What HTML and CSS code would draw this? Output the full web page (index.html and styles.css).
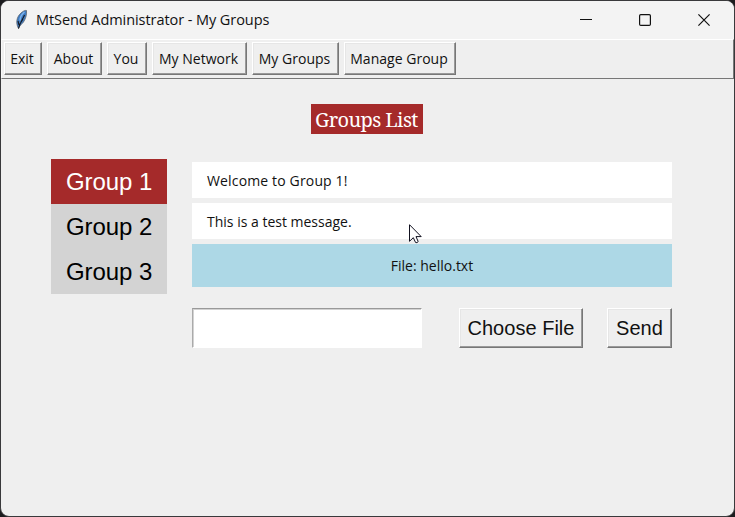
FILE: index.html
```html
<!DOCTYPE html>
<html lang="en">
<head>
<meta charset="utf-8">
<title>MtSend Administrator - My Groups</title>
<link rel="stylesheet" href="styles.css">
</head>
<body>
<div class="window">
  <header class="titlebar">
    <svg class="feather" width="14" height="22" viewBox="0 0 14 22">
      <path d="M3.5 19.500C.5 14 1.500 8 6 4 7.500 2.500 10 1 11.500 1.500 12 6 10.500 10 8.500 13 7 15 5 16 3.500 19.500Z" fill="#3e7cc4" stroke="#5e6670" stroke-width=".8"/>
      <path d="M9.500 3C6 6 5 9 5 11.500" fill="none" stroke="#7fb3ea" stroke-width="1.500"/>
      <path d="M9.500 6C8.500 9 5 13 3.500 19.500M8 10L5.500 14M3 12L4 16" fill="none" stroke="#15181f" stroke-width="1.100"/>
    </svg>
    <h1 class="title">MtSend Administrator - My Groups</h1>
    <div class="controls">
      <svg width="12" height="12" viewBox="0 0 12 12"><path d="M0 5.500H12"/></svg>
      <svg width="12" height="12" viewBox="0 0 12 12"><rect x=".6" y=".6" width="10.800" height="10.800" rx="1.200"/></svg>
      <svg width="12" height="12" viewBox="0 0 12 12"><path d="M.4.4L11.600 11.600M11.600.4L.4 11.600"/></svg>
    </div>
  </header>
  <nav class="toolbar">
    <button class="btn exit">Exit</button>
    <button class="btn about">About</button>
    <button class="btn you">You</button>
    <button class="btn network">My Network</button>
    <button class="btn groups">My Groups</button>
    <button class="btn manage">Manage Group</button>
  </nav>
  <main class="content">
    <h2 class="heading">Groups List</h2>
    <div class="columns">
      <ul class="group-list">
        <li class="group selected">Group 1</li>
        <li class="group">Group 2</li>
        <li class="group">Group 3</li>
      </ul>
      <section class="chat">
        <div class="message welcome">Welcome to Group 1!</div>
        <div class="message test">This is a test message.</div>
        <div class="file">File: hello.txt</div>
        <form class="compose">
          <input class="entry" type="text" aria-label="Message">
          <button class="btn big choose" type="button">Choose File</button>
          <button class="btn big send" type="button">Send</button>
        </form>
      </section>
    </div>
  </main>
  <svg class="cursor" width="13" height="20" viewBox="0 0 13 20"><path d="M.5.700V17.300L4.300 13.700 6.600 18.500Q8 19.200 9.200 17.600L7 12.600H12.200Z" fill="#fff" stroke="#11111f" stroke-width="1"/></svg>
</div>
</body>
</html>
```

FILE: styles.css
```css
* { box-sizing: border-box; }
body { margin: 0; background: #1c1c1e; }
.window {
  position: relative;
  width: 735px;
  height: 517px;
  border: 1px solid #39393b;
  border-radius: 9px;
  background: #efefef;
  overflow: hidden;
}
.titlebar {
  display: flex;
  align-items: center;
  height: 38px;
  padding: 0 24px 0 14px;
  background: #f3f3f3;
}
.feather { margin-top: -1px; }
.title {
  margin: 0 0 0 7px;
  font: 400 14.5px/20px "Open Sans", sans-serif;
  letter-spacing: -.07px;
  color: #111;
  white-space: nowrap;
}
.controls { display: flex; gap: 47px; margin-left: auto; }
.controls svg { fill: none; stroke: #111; stroke-width: 1.2; }
.toolbar {
  display: flex;
  gap: 5px;
  height: 40px;
  padding: 2px 2px 3px;
  border: 1px solid;
  border-color: #fff #777 #777 #f8f8f8;
}
.btn {
  height: 33px;
  padding: 0;
  border: 1px solid;
  border-color: #fff #777 #777 #fff;
  border-radius: 0;
  background: #efefef;
  box-shadow: inset -1px -1px #9a9a9a, inset 1px 1px #e6e6e6;
  color: #111;
  font: 400 14px/29px "Open Sans", sans-serif;
  letter-spacing: .02px;
  white-space: nowrap;
}
.toolbar .btn { padding-right: 2px; }
.exit { width: 38px; }
.about { width: 55px; }
.you { width: 40px; }
.network { width: 95px; }
.groups { width: 87px; }
.manage { width: 112px; }
.content { padding-top: 25px; }
.heading {
  width: 112px;
  height: 30px;
  margin: 0 0 0 310px;
  padding-left: 4px;
  background: #a52a2a;
  color: #fff;
  font: 400 20px/31px "Noto Serif", "Droid Serif", "DejaVu Serif", serif;
  letter-spacing: -.6px;
  white-space: nowrap;
}
.columns { display: flex; gap: 25px; margin: 25px 0 0 50px; }
.group-list { width: 116px; margin: 0; padding: 0; list-style: none; }
.group {
  height: 45px;
  padding-left: 15px;
  background: #d3d3d3;
  color: #000;
  font: 400 24px/46px "Liberation Sans", sans-serif;
  letter-spacing: -.08px;
}
.selected { background: #a52a2a; color: #fff; }
.chat { width: 480px; padding-top: 3px; }
.message, .file { color: #111; font: 400 14px/37px "Open Sans", sans-serif; }
.message { height: 36px; margin-bottom: 5px; padding-left: 15px; background: #fff; }
.welcome { letter-spacing: .15px; }
.file { height: 43px; line-height: 43px; background: #add8e6; text-align: center; }
.compose { display: flex; margin-top: 21px; }
.entry {
  width: 230px;
  height: 40px;
  border: 1px solid;
  border-color: #999 #fff #fff #aaa;
  background: #fff;
  box-shadow: inset 1px 1px #d2d2d2;
}
.big { height: 40px; font: 400 20px/38px "Liberation Sans", sans-serif; }
.choose { width: 124px; margin-left: 37px; }
.send { width: 65px; margin-left: 24px; }
.cursor { position: absolute; left: 408px; top: 223px; }
```
